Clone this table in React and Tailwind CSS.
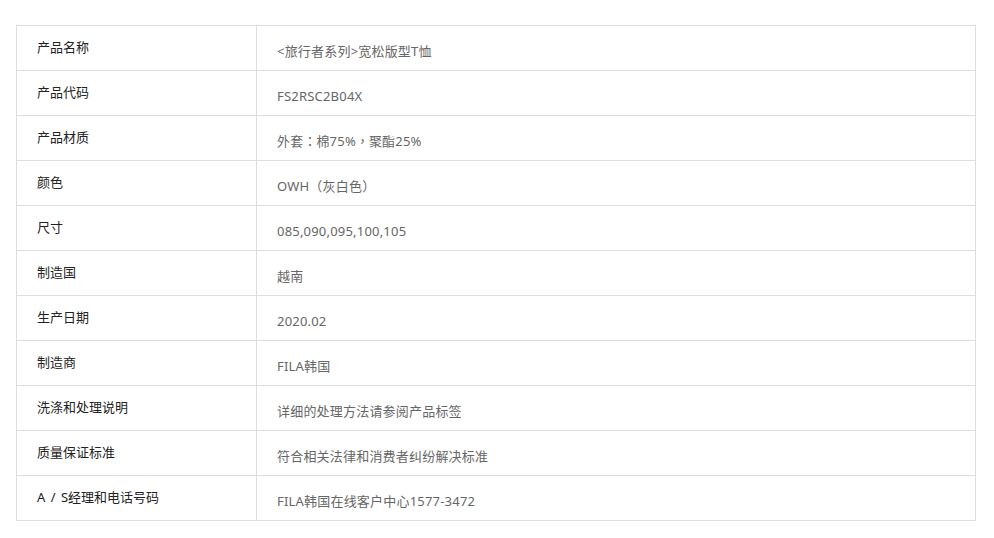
import React from 'react';

// full-width punctuation, centred in its own cell like the reference
const P = ({ children }) => (
  <span className="inline-block w-[13px] text-center font-['Noto_Sans_CJK_TC',sans-serif]">{children}</span>
);

const rows = [
  ['产品名称', '<旅行者系列>宽松版型T恤'],
  ['产品代码', 'FS2RSC2B04X'],
  ['产品材质', <>外套<P>：</P>棉75%<P>，</P>聚酯25%</>],
  ['颜色', 'OWH（灰白色）'],
  ['尺寸', '085,090,095,100,105'],
  ['制造国', '越南'],
  ['生产日期', '2020.02'],
  ['制造商', 'FILA韩国'],
  ['洗涤和处理说明', '详细的处理方法请参阅产品标签'],
  ['质量保证标准', '符合相关法律和消费者纠纷解决标准'],
  [<>A <span className="mx-[2px]">/</span> S经理和电话号码</>, 'FILA韩国在线客户中心1577-3472'],
];

export default function App() {
  return (
    <div className="min-h-[538px] bg-white pl-4 pt-[25px] font-['Noto_Sans','Noto_Sans_CJK_SC',sans-serif] text-[13px]">
      {/* Spec table */}
      <div className="w-[960px] border-t border-l border-[#dddddd]">
        {rows.map(([label, value], i) => (
          <div key={i} className="flex h-[45px] border-b border-[#dddddd]">
            <div className="w-[240px] border-r border-[#dddddd] pl-5 pt-[11px] leading-5 text-[#222222]">
              {label}
            </div>
            <div className="flex-1 border-r border-[#dddddd] pl-5 pt-[15px] leading-5 tracking-[0.2px] text-[#666666]">
              {value}
            </div>
          </div>
        ))}
      </div>
    </div>
  );
}
